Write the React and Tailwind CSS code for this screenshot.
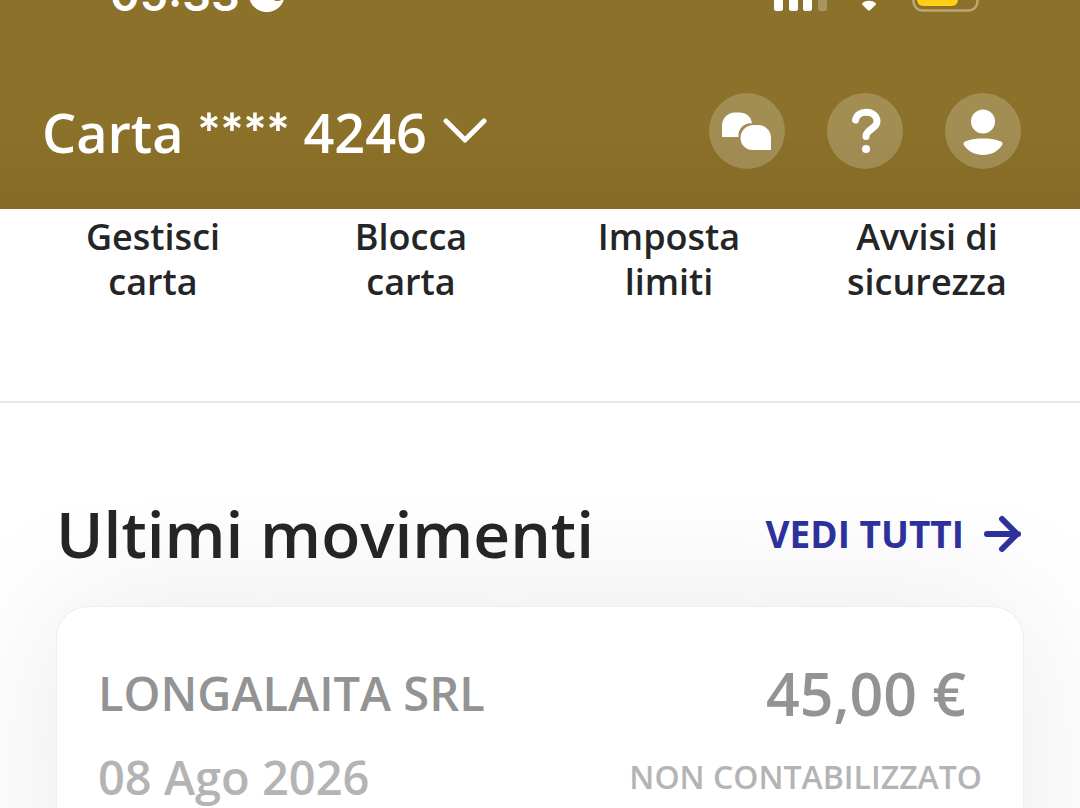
// App.jsx
const actions = [
  ['Gestisci', 'carta'],
  ['Blocca', 'carta'],
  ['Imposta', 'limiti'],
  ['Avvisi di', 'sicurezza'],
];

const movements = [
  { name: 'LONGALAITA SRL', amount: '45,00 €', date: '08 Ago 2026', status: 'NON CONTABILIZZATO' },
];

function StatusBar() {
  return (
    <div className="flex h-3 items-end justify-between pr-[101px] pl-[110px]">
      <div className="flex items-end gap-2">
        <span className="font-['Inter',sans-serif] text-[45px] leading-[35px] font-semibold">05:33</span>
        <svg className="h-9 w-9" viewBox="0 0 36 36" fill="currentColor" aria-hidden="true">
          <path d="M13 1A18 18 0 1 0 36 23C31 25.500 27 25.500 24 23C16 18 11 8 13 1Z" />
        </svg>
      </div>
      <div className="flex items-end">
        <svg className="h-9 w-[54px]" viewBox="0 0 54 36" fill="currentColor" aria-hidden="true">
          <rect x="0" y="22" width="9" height="13" rx="2.500" />
          <rect x="15" y="16" width="9" height="19" rx="2.500" />
          <rect x="29" y="9" width="9" height="26" rx="2.500" />
          <rect x="44" y="1" width="9" height="34" rx="2.500" opacity="0.250" />
        </svg>
        <svg className="ml-6 h-9 w-9" viewBox="0 0 36 36" fill="currentColor" aria-hidden="true">
          <path d="M10.500 27C14 24 20 24 23.500 27C24.500 28 24 28.500 23.500 29L18 34.300Q17 35 16 34.300L10.500 29C10 28.500 9.500 28 10.500 27Z" />
        </svg>
        <svg className="ml-6 h-9 w-[67px]" viewBox="0 0 67 36" aria-hidden="true">
          <rect x="1.500" y="3" width="64" height="31.500" rx="9" fill="none" stroke="#bda775" strokeWidth="2.500" />
          <rect x="5" y="7" width="41" height="23" rx="6" fill="#ffd016" />
        </svg>
      </div>
    </div>
  );
}

function ChatIcon() {
  return (
    <svg className="h-[76px] w-[76px]" viewBox="0 0 76 76" fill="currentColor" aria-hidden="true">
      <path d="M13 44V32.500A13 13 0 0 1 26 19.500H31A12 12 0 0 1 43 30.300H42A12 12 0 0 0 29.500 44Z" />
      <path d="M62 57H43.500A12 12 0 0 1 31.500 45A13 13 0 0 1 44.500 32H49A13 13 0 0 1 62 45Z" />
    </svg>
  );
}

function HelpIcon() {
  return (
    <svg className="h-[76px] w-[76px]" viewBox="0 0 76 76" fill="none" aria-hidden="true">
      <path
        d="M28.500 27C29.500 22 33.500 19.300 39 19.300C45.500 19.300 50 23 50 28.500C50 36 39 36 39 43.500"
        stroke="currentColor"
        strokeWidth="7"
        strokeLinecap="round"
      />
      <circle cx="39" cy="56" r="4" fill="currentColor" />
    </svg>
  );
}

function ProfileIcon() {
  return (
    <svg className="h-[76px] w-[76px]" viewBox="0 0 76 76" fill="currentColor" aria-hidden="true">
      <circle cx="38" cy="28.500" r="12" />
      <path d="M20 48.500C26 46 32 45.500 38 45.500C44 45.500 50 46 56 48.500C57.500 49.200 58 50.500 57.200 52C53 58.500 46 62 38 62C30 62 23 58.500 18.800 52C18 50.500 18.500 49.200 20 48.500Z" />
    </svg>
  );
}

function RoundButton({ label, children }) {
  return (
    <button type="button" aria-label={label} className="h-[76px] w-[76px] rounded-full bg-white/20">
      {children}
    </button>
  );
}

function Header() {
  return (
    <header className="bg-linear-to-b from-[#8b7129] from-60% to-[#866a27] pb-[38px] text-white">
      <StatusBar />
      <div className="mt-[78px] flex items-center justify-between pr-[59px] pl-[42px]">
        <button type="button" className="flex items-center gap-4 text-[54px] leading-[76px] font-semibold">
          <span className="pt-1">
            Carta <span className="font-['Lato',sans-serif] font-black">****</span> 4246
          </span>
          <svg className="h-7 w-11" viewBox="0 0 44 28" fill="none" aria-hidden="true">
            <path d="M3 4L22 23L41 4" stroke="currentColor" strokeWidth="5" strokeLinecap="round" strokeLinejoin="round" />
          </svg>
        </button>
        <div className="flex gap-[42px]">
          <RoundButton label="Messaggi">
            <ChatIcon />
          </RoundButton>
          <RoundButton label="Aiuto">
            <HelpIcon />
          </RoundButton>
          <RoundButton label="Profilo">
            <ProfileIcon />
          </RoundButton>
        </div>
      </div>
    </header>
  );
}

function MovementRow({ movement }) {
  return (
    <li className="px-[41px] pt-11 pb-10">
      <div className="flex h-[84px] items-center justify-between pr-4 font-semibold text-[#939393]">
        <span className="text-[47px]">{movement.name}</span>
        <span className="text-[59px]">{movement.amount}</span>
      </div>
      <div className="flex h-[84px] items-center justify-between font-semibold text-[#b4b4b5]">
        <span className="text-[47px]">{movement.date}</span>
        <span className="text-[32px]">{movement.status}</span>
      </div>
    </li>
  );
}

export default function App() {
  return (
    <div className="h-screen overflow-hidden bg-white font-['Open_Sans','Noto_Sans',sans-serif] text-[#242527]">
      <Header />
      <nav className="grid grid-cols-4 border-b-2 border-[#e6e6e6] px-6 pt-[5px] pb-[97px]">
        {actions.map(([first, second]) => (
          <button key={first} type="button" className="text-[36px] leading-[45px] font-semibold">
            {first}
            <br />
            {second}
          </button>
        ))}
      </nav>
      <main className="px-14 pt-[90px]">
        <div className="flex items-center justify-between">
          <h1 className="text-[64px] leading-[82px] font-semibold">Ultimi movimenti</h1>
          <a href="#movimenti" className="flex items-center gap-5 text-[37px] font-bold text-[#2e309c]">
            VEDI TUTTI
            <svg className="h-10 w-10" viewBox="0 0 40 40" fill="none" aria-hidden="true">
              <path d="M3 20H34M18 5L33 20L18 35" stroke="currentColor" strokeWidth="6" strokeLinecap="round" strokeLinejoin="round" />
            </svg>
          </a>
        </div>
        <ul
          id="movimenti"
          className="mt-[31px] min-h-[480px] rounded-[32px] border border-[#eceef3] bg-white shadow-[0_0_150px_rgba(0,0,0,0.09)]"
        >
          {movements.map((movement) => (
            <MovementRow key={movement.name} movement={movement} />
          ))}
        </ul>
      </main>
    </div>
  );
}
